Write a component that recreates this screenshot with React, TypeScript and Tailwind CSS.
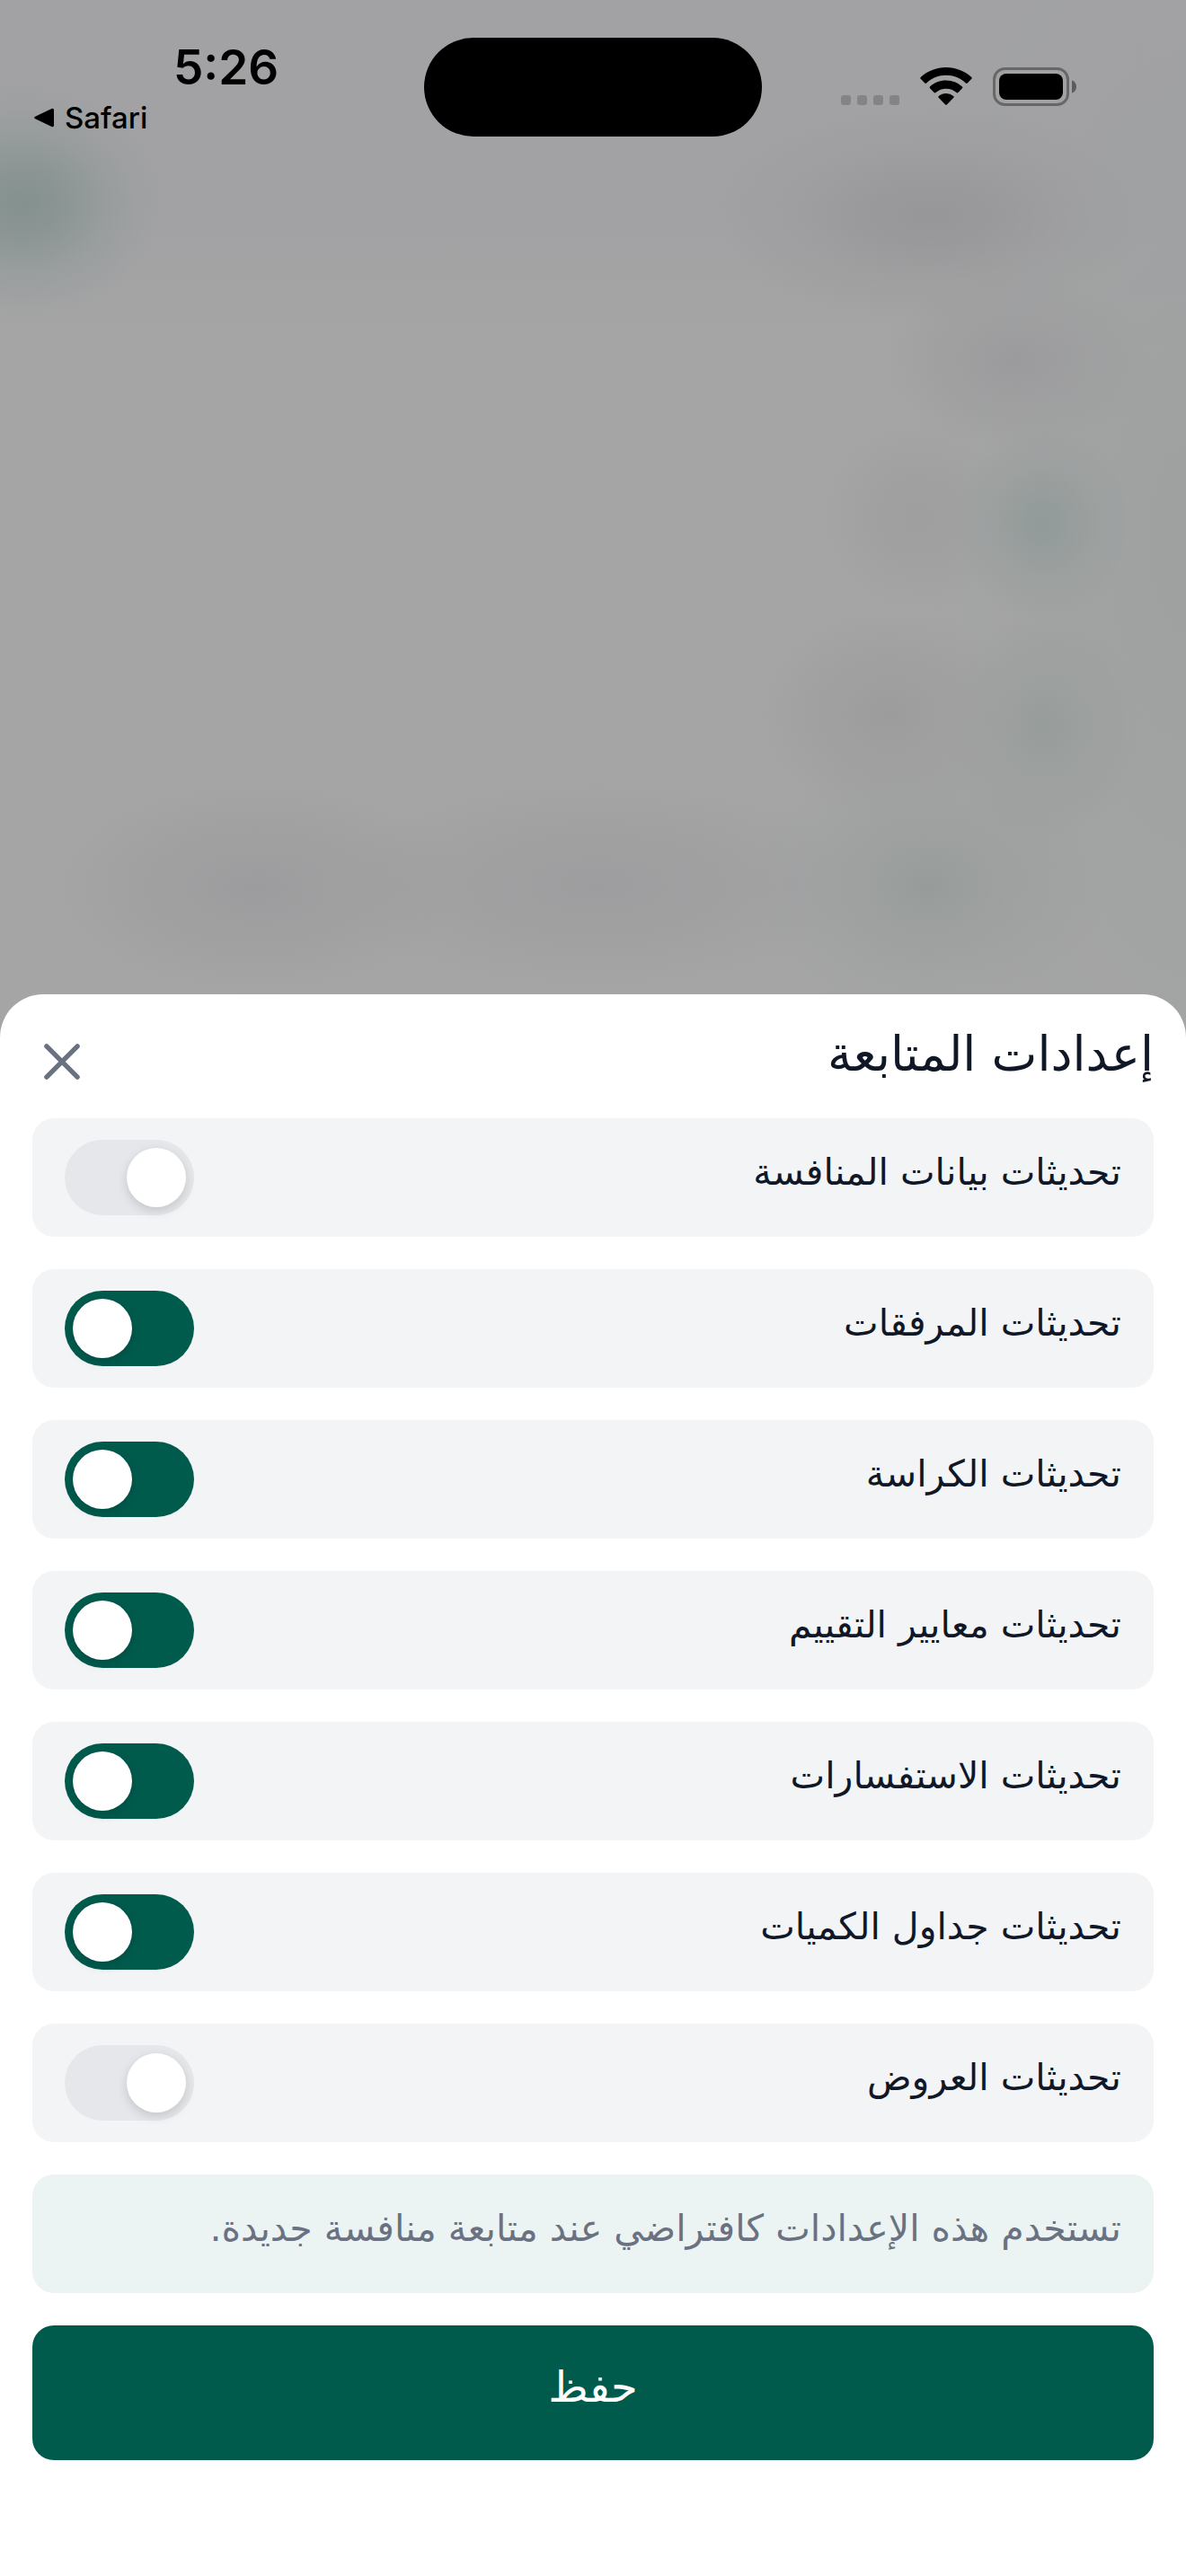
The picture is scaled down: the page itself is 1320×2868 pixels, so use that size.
import React, { useState } from 'react';

const initialSettings = [
  { id: 'competition', label: 'تحديثات بيانات المنافسة', enabled: false },
  { id: 'attachments', label: 'تحديثات المرفقات', enabled: true },
  { id: 'booklet', label: 'تحديثات الكراسة', enabled: true },
  { id: 'criteria', label: 'تحديثات معايير التقييم', enabled: true },
  { id: 'inquiries', label: 'تحديثات الاستفسارات', enabled: true },
  { id: 'quantities', label: 'تحديثات جداول الكميات', enabled: true },
  { id: 'offers', label: 'تحديثات العروض', enabled: false },
];

function StatusBar() {
  return (
    <header dir="ltr" className="grid grid-cols-[1fr_auto_1fr] pt-[42px] font-['Inter',sans-serif] text-black">
      <div className="flex flex-col pl-9">
        <time className="pl-[157px] text-[53px] leading-[66px] font-semibold">5:26</time>
        <a href="#" className="flex items-center gap-3 text-[33px] leading-[46px] font-medium">
          <svg viewBox="0 0 24 24" className="size-6" fill="currentColor" aria-hidden="true">
            <path d="M3.2 10.8 21.5 2.1Q24 1.2 24 3.8V20.2Q24 22.8 21.5 21.9L3.2 13.2Q1 12 3.2 10.8Z" />
          </svg>
          Safari
        </a>
      </div>
      <div className="h-[110px] w-[376px] rounded-full bg-black" />
      <div className="flex items-start justify-end gap-[23px] pt-[33px] pr-[121px]">
        <div className="flex gap-[7px] pt-[31px]">
          <span className="size-[11px] rounded-[3px] bg-[#848485]" />
          <span className="size-[11px] rounded-[3px] bg-[#848485]" />
          <span className="size-[11px] rounded-[3px] bg-[#848485]" />
          <span className="size-[11px] rounded-[3px] bg-[#848485]" />
        </div>
        <svg viewBox="0 0 58 42" className="h-[42px] w-[58px]" fill="currentColor" aria-hidden="true">
          <path d="M29 0C18.200 0 8.200 4.100 .7 11q-.9.900 0 1.800l4.600 4.700q.9.900 1.800 0C13 12 20.600 8.800 29 8.800S45 12 50.900 17.500q.9.900 1.800 0l4.600-4.700q.9-.9 0-1.800C49.800 4.100 39.800 0 29 0Z" />
          <path d="M29 14.600c-6.900 0-13.200 2.600-18 6.900q-.9.900 0 1.800l4.600 4.700q.9.900 1.900 0a17.400 17.400 0 0 1 23 0q1 .9 1.900 0l4.600-4.700q.9-.9 0-1.800a26.800 26.800 0 0 0-18-6.900Z" />
          <path d="M29 29c-3.100 0-5.900 1.100-8.200 2.900q-1 .9-.1 1.800l7.300 7.600q1 1 2 0l7.300-7.600q.9-.9-.1-1.800A13.200 13.200 0 0 0 29 29Z" />
        </svg>
        <svg viewBox="0 0 94 43" className="h-[43px] w-[94px]" aria-hidden="true">
          <rect x="1.500" y="1.500" width="82" height="40" rx="12" fill="none" stroke="#676768" strokeWidth="3" />
          <rect x="7" y="7" width="71" height="29" rx="8" />
          <path d="M88 14.500c3.300 1.200 5 3.600 5 7s-1.700 5.800-5 7Z" fill="#5c5c5d" />
        </svg>
      </div>
    </header>
  );
}

type ToggleRowProps = { id: string; label: string; enabled: boolean; onChange: () => void };

function ToggleRow({ id, label, enabled, onChange }: ToggleRowProps) {
  return (
    <div className="flex items-center justify-between rounded-3xl bg-[#f3f4f6] px-9 py-6">
      <label htmlFor={id} className="pb-3 text-[41px] leading-[60px]">{label}</label>
      <input
        id={id}
        type="checkbox"
        role="switch"
        checked={enabled}
        onChange={onChange}
        className="h-[84px] w-36 shrink-0 cursor-pointer appearance-none rounded-full bg-gray-200 p-[9px] transition before:block before:size-[66px] before:rounded-full before:bg-white before:shadow-[0_4px_12px_rgba(0,0,0,0.15)] before:transition before:content-[''] checked:bg-[#005b4d] checked:before:-translate-x-[60px]"
      />
    </div>
  );
}

export default function App() {
  const [settings, setSettings] = useState(initialSettings);

  const toggle = (id: string) =>
    setSettings(settings.map((s) => (s.id === id ? { ...s, enabled: !s.enabled } : s)));

  return (
    <div
      dir="rtl"
      lang="ar"
      className="flex min-h-screen flex-col bg-[#a5a5a5] bg-[radial-gradient(155px_130px_at_25px_225px,#84918f_0%,#84918fcc_25%,#84918f44_65%,#84918f00_100%),radial-gradient(240px_120px_at_1035px_240px,#969698_0%,#96969855_60%,#96969800_100%),radial-gradient(150px_100px_at_1130px_402px,#9b9b9d_0%,#9b9b9d66_60%,#9b9b9d00_100%),radial-gradient(100px_110px_at_1160px_582px,#909a98_0%,#909a9855_55%,#909a9800_100%),radial-gradient(110px_110px_at_1020px_575px,#9e9e9f_0%,#9e9e9f66_60%,#9e9e9f00_100%),radial-gradient(150px_120px_at_990px_795px,#9c9c9c_0%,#9c9c9c66_60%,#9c9c9c00_100%),radial-gradient(110px_130px_at_1160px_810px,#979d9b_0%,#979d9b55_60%,#979d9b00_100%),radial-gradient(230px_120px_at_285px_988px,#9c9c9e_0%,#9c9c9e66_60%,#9c9c9e00_100%),radial-gradient(300px_120px_at_665px_985px,#9d9d9f_0%,#9d9d9f66_60%,#9d9d9f00_100%),radial-gradient(200px_160px_at_1032px_985px,#979c9b_0%,#979c9b55_50%,#979c9b00_100%),radial-gradient(300px_800px_at_1320px_600px,#9fa1a1_0%,#9fa1a100_100%),linear-gradient(180deg,#a2a2a4_0px,#a2a2a4_230px,#a5a5a5_400px)] font-['DejaVu_Sans',sans-serif] text-gray-900"
    >
      <StatusBar />

      {/* Bottom sheet */}
      <main className="mt-auto rounded-t-[48px] bg-white px-9 pt-[39px] pb-[129px]">
        <div className="flex items-start justify-between pb-[27px]">
          <h1 className="text-[54px] leading-[56px]">إعدادات المتابعة</h1>
          <button type="button" aria-label="إغلاق" className="-ml-[3px] cursor-pointer text-gray-500">
            <svg viewBox="0 0 24 24" className="size-[72px]" fill="none" stroke="currentColor" strokeWidth="1.8" strokeLinecap="round">
              <path d="M6.300 6.300l11.400 11.400M17.700 6.300 6.300 17.700" />
            </svg>
          </button>
        </div>

        <form className="flex flex-col gap-9" onSubmit={(e) => e.preventDefault()}>
          {settings.map((s) => (
            <ToggleRow key={s.id} {...s} onChange={() => toggle(s.id)} />
          ))}
          <p className="rounded-3xl bg-[#ecf3f3] px-9 pt-[30px] pb-[42px] text-[41px] leading-[60px] text-gray-500">
            تستخدم هذه الإعدادات كافتراضي عند متابعة منافسة جديدة.
          </p>
          <button type="submit" className="cursor-pointer rounded-3xl bg-[#005b4d] pt-[38px] pb-[52px] text-[48px] leading-[60px] text-white">
            حفظ
          </button>
        </form>
      </main>
    </div>
  );
}
